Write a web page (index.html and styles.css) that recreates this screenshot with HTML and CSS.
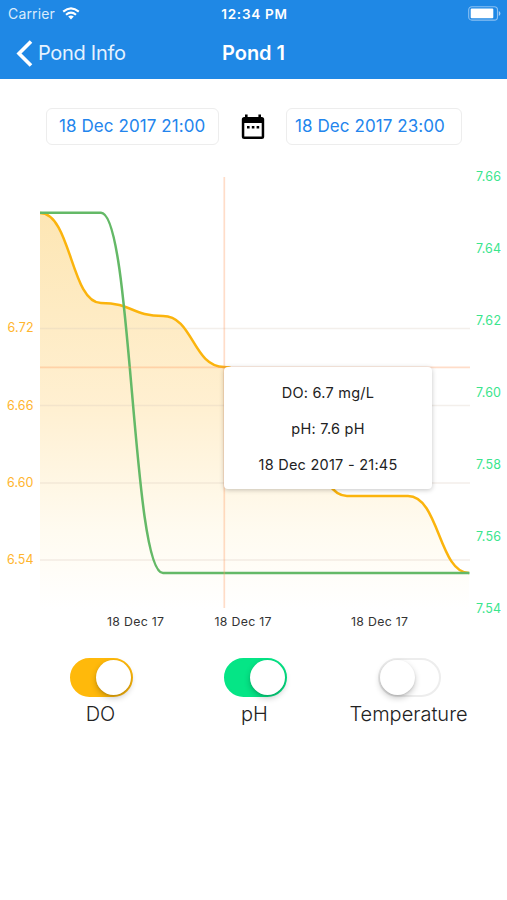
FILE: index.html
```html
<!DOCTYPE html>
<html lang="en">
<head>
<meta charset="utf-8">
<title>Pond 1</title>
<link rel="stylesheet" href="styles.css">
</head>
<body>
<header class="header">
  <div class="status">
    <div class="carrier"><span>Carrier</span>
      <svg width="18" height="13" viewBox="0 0 18 13" fill="none" stroke="#fff" stroke-width="2.1"><path d="M1.2 4.6Q9-2 16.8 4.6M4 7.7Q9 3.5 14 7.7"/><path d="M9 12.4L6.2 9.6Q9 7.4 11.8 9.6Z" fill="#fff" stroke="none"/></svg>
    </div>
    <div class="clock">12:34 PM</div>
    <svg class="battery" width="33" height="15" viewBox="0 0 33 15"><rect x=".7" y=".7" width="28.8" height="13.4" rx="3.2" fill="none" stroke="#8bc0f2" stroke-width="1.1"/><rect x="2.7" y="2.6" width="22.6" height="9.6" rx="1" fill="#fff"/><path d="M30.8 5v5q1.6-.8 1.6-2.5T30.8 5Z" fill="#a5cef5"/></svg>
  </div>
  <nav class="nav">
    <div class="back"><svg width="17" height="27" viewBox="0 0 17 27" fill="none" stroke="#fff" stroke-width="3.6"><path d="M15 1.5L3 13.5L15 25.5"/></svg><span>Pond Info</span></div>
    <h1 class="title">Pond 1</h1>
  </nav>
</header>
<main>
  <section class="range">
    <div class="date">18 Dec 2017 21:00</div>
    <svg class="calendar" width="24" height="26" viewBox="0 0 24 26"><path fill="#000" fill-rule="evenodd" d="M4 .5h2.6V3h10.8V.5H20V3h.7Q23.2 3 23.2 5.5v17q0 2.5-2.5 2.5H3.3Q.8 25 .8 22.5V5.5Q.8 3 3.3 3H4ZM3.3 9v13.500h17.400V9Z"/><path d="M6 12h2.600v2.600H6zM10.800 12h2.600v2.600h-2.600zM15.600 12h2.600v2.600h-2.600z"/></svg>
    <div class="date date-end">18 Dec 2017 23:00</div>
  </section>
  <section class="chart">
    <svg width="507" height="480" viewBox="0 160 507 480">
      <defs><linearGradient id="fill" x1="0" y1="212" x2="0" y2="609" gradientUnits="userSpaceOnUse"><stop offset="0" stop-color="#fde6b4"/><stop offset=".5" stop-color="#fff0d2"/><stop offset=".8" stop-color="#fffbf0"/><stop offset="1" stop-color="#fff"/></linearGradient></defs>
      <path fill="url(#fill)" d="M40 213C71 213 71 303 101 303C132 303 132 316 163 316C193 316 193 367 224 367C254 367 254 418 285 418C316 418 316 496 347 496H408C439 496 439 573 469 573V609H40Z"/>
      <path class="grid" d="M40 328.500H470M40 405.500H470M40 483H470M40 560H470"/>
      <path class="do-line" d="M40 213C71 213 71 303 101 303C132 303 132 316 163 316C193 316 193 367 224 367C254 367 254 418 285 418C316 418 316 496 347 496H408C439 496 439 573 469 573"/>
      <path class="ph-line" d="M40 212.700H101C132 212.700 132 573 163 573H469.500"/>
      <path class="cross" d="M224.300 177V608M40 367.300H470"/>
      <g class="do-axis"><text x="7.500" y="332.400" textLength="26">6.72</text><text x="7" y="409.600" textLength="26.500">6.66</text><text x="7" y="487" textLength="26.500">6.60</text><text x="7" y="564.200" textLength="26.500">6.54</text></g>
      <g class="ph-axis"><text x="476" y="180.500" textLength="25">7.66</text><text x="476" y="252.500" textLength="25">7.64</text><text x="476" y="324.500" textLength="25">7.62</text><text x="476" y="396.500" textLength="25">7.60</text><text x="476" y="468.700" textLength="25">7.58</text><text x="476" y="540.700" textLength="25">7.56</text><text x="476" y="612.700" textLength="25">7.54</text></g>
      <g class="x-axis"><text x="107" y="626.300" textLength="57">18 Dec 17</text><text x="214.500" y="626.300" textLength="57">18 Dec 17</text><text x="351" y="626.300" textLength="57">18 Dec 17</text></g>
    </svg>
    <div class="tooltip"><div>DO: 6.7 mg/L</div><div>pH: 7.6 pH</div><div>18 Dec 2017 - 21:45</div></div>
  </section>
  <section class="toggles">
    <div class="toggle"><div class="switch do-on"></div><div class="label">DO</div></div>
    <div class="toggle"><div class="switch ph-on"></div><div class="label">pH</div></div>
    <div class="toggle"><div class="switch"></div><div class="label">Temperature</div></div>
  </section>
</main>
</body>
</html>
```
FILE: styles.css
```css
* { box-sizing: border-box; }
body { margin: 0; background: #fff; font-family: Inter, "Liberation Sans", sans-serif; color: #222; }
.header { height: 79px; background: #1f88e5; color: #fff; }
.status { height: 27px; display: grid; grid-template-columns: 1fr auto 1fr; align-items: center; padding: 0 6px 0 8px; }
.carrier { display: flex; align-items: center; gap: 7px; font-size: 14px; color: #d9ebfc; letter-spacing: .15px; }
.clock { font-size: 13.5px; font-weight: 600; letter-spacing: .75px; }
.battery { justify-self: end; }
.nav { height: 52px; display: grid; grid-template-columns: 1fr auto 1fr; align-items: center; padding-left: 16px; padding-right: 16px; }
.back { display: flex; align-items: center; gap: 5px; font-size: 20px; color: #e5f2ff; letter-spacing: -.3px; white-space: nowrap; }
.title { margin: 0; font-size: 20px; font-weight: 600; letter-spacing: -.05px; }
.range { height: 81px; padding: 29px 45px 0 46px; display: flex; align-items: flex-start; justify-content: space-between; }
.date { width: 173px; height: 37px; border: 1px solid #ededed; border-radius: 6px; font-size: 17px; line-height: 35px; color: #2385ed; padding-left: 12px; letter-spacing: .08px; white-space: nowrap; }
.date-end { width: 176px; padding-left: 8px; }
.calendar { margin-top: 6px; }
.chart { position: relative; height: 480px; }
.chart svg { display: block; }
.grid { stroke: #d8c9bd; stroke-opacity: .3; stroke-width: 1.5; fill: none; }
.cross { stroke: #ff9d63; stroke-opacity: .35; stroke-width: 1.7; fill: none; }
.do-line { stroke: #fbb40d; stroke-width: 2.5; fill: none; }
.ph-line { stroke: #64b967; stroke-width: 2.5; fill: none; }
.do-axis { font-size: 12.5px; fill: #ffb52e; }
.ph-axis { font-size: 12.5px; fill: #3ae58d; }
.x-axis { font-size: 12.3px; fill: #333; }
.tooltip { position: absolute; left: 224px; top: 207px; width: 208px; height: 122px; padding: 8px 0; background: #fff; border-radius: 4px; box-shadow: 0 1px 5px rgba(0,0,0,.23); text-align: center; font-size: 14.5px; letter-spacing: .25px; line-height: 36px; }
.toggles { display: grid; grid-template-columns: repeat(3, 154px); margin-left: 24px; padding-top: 18px; }
.toggle { display: flex; flex-direction: column; align-items: center; }
.switch { width: 63px; height: 39px; border: 2px solid #ededed; border-radius: 20px; display: flex; background: #fff; }
.switch::after { content: ""; width: 35px; height: 35px; border-radius: 50%; background: #fff; box-shadow: 0 3px 6px rgba(0,0,0,.22), 0 1px 2px rgba(0,0,0,.1); }
.do-on, .ph-on { justify-content: flex-end; }
.do-on { background: #ffb90b; border-color: #ffb90b; }
.ph-on { background: #05e586; border-color: #05e586; }
.label { margin: 4px 1px 0 0; font-size: 20px; line-height: 26px; font-weight: 300; }
```
